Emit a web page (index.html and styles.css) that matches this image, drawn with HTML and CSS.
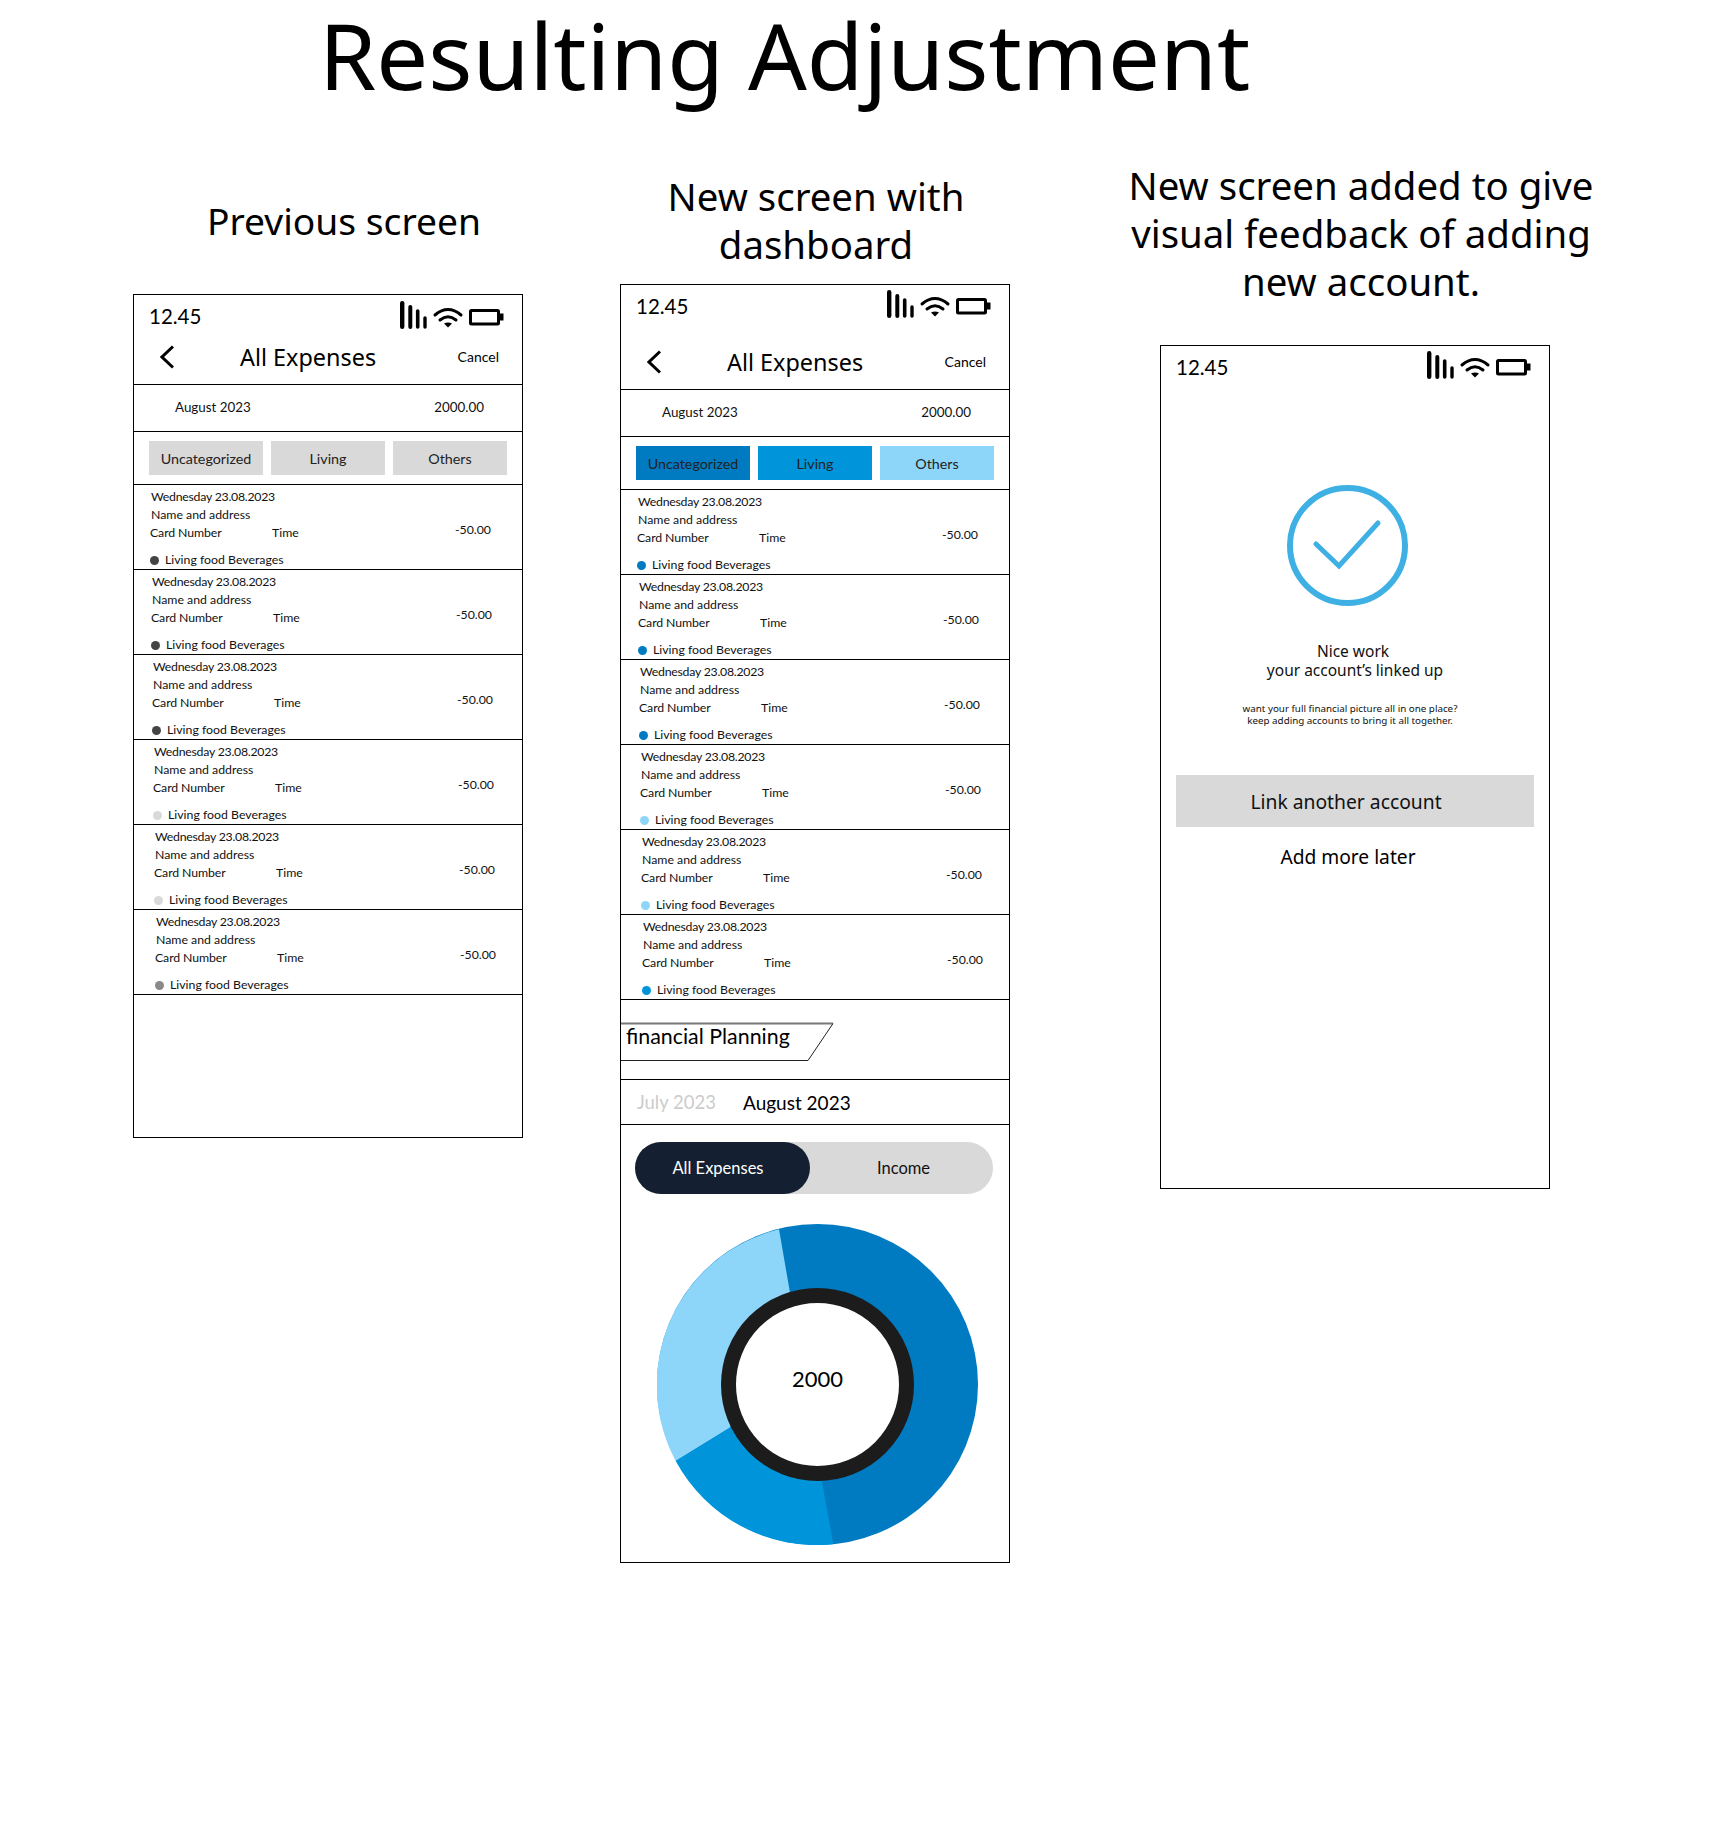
FILE: index.html
```html
<!DOCTYPE html>
<html lang="en">
<head>
<meta charset="utf-8">
<title>Resulting Adjustment</title>
<link rel="stylesheet" href="styles.css">
</head>
<body>
<h1 class="title">Resulting Adjustment</h1>
<main class="columns">

<section class="col col-prev">
<h2 class="heading">Previous screen</h2>
<div class="frame">
<header class="top">
<div class="status"><span class="clock">12.45</span>
<svg class="sys" width="104" height="28" viewBox="0 0 104 28"><g fill="none" stroke="#000" stroke-linecap="round"><path stroke-width="4.4" d="M2.2 2.2V25.8"/><path stroke-width="4" d="M10.3 6V26"/><path stroke-width="3.6" d="M17.7 10V26"/><path stroke-width="3.4" d="M25 17V26"/><path stroke-width="3" d="M35 14Q48 3 61 14"/><path stroke-width="3" d="M40 19Q48 12.5 56 19"/></g><path d="M44 22.5Q48 20.5 52 22.5L48 26.5Z"/><rect x="70.5" y="9.5" width="28" height="13.5" rx="1" fill="none" stroke="#000" stroke-width="3"/><path d="M100 12.5h3.5v7H100z"/></svg></div>
<div class="nav"><svg class="back" width="14" height="24" viewBox="0 0 14 24"><path d="M13 1.5L2 12L13 22.5" fill="none" stroke="#000" stroke-width="3"/></svg><span class="nav-title">All Expenses</span><span class="cancel">Cancel</span></div>
</header>
<div class="summary"><span>August 2023</span><span class="total">2000.00</span></div>
<div class="tabs"><span class="tab">Uncategorized</span><span class="tab">Living</span><span class="tab">Others</span></div>
<ul class="list">
<li class="row"><div class="row-left"><div class="l1">Wednesday 23.08.2023</div><div class="l2">Name and address</div><div class="l3"><span class="card">Card Number</span><span>Time</span></div><div class="l4"><i class="dot d-dark"></i>Living food Beverages</div></div><div class="amount">-50.00</div></li>
<li class="row"><div class="row-left"><div class="l1">Wednesday 23.08.2023</div><div class="l2">Name and address</div><div class="l3"><span class="card">Card Number</span><span>Time</span></div><div class="l4"><i class="dot d-dark"></i>Living food Beverages</div></div><div class="amount">-50.00</div></li>
<li class="row"><div class="row-left"><div class="l1">Wednesday 23.08.2023</div><div class="l2">Name and address</div><div class="l3"><span class="card">Card Number</span><span>Time</span></div><div class="l4"><i class="dot d-dark"></i>Living food Beverages</div></div><div class="amount">-50.00</div></li>
<li class="row"><div class="row-left"><div class="l1">Wednesday 23.08.2023</div><div class="l2">Name and address</div><div class="l3"><span class="card">Card Number</span><span>Time</span></div><div class="l4"><i class="dot d-pale"></i>Living food Beverages</div></div><div class="amount">-50.00</div></li>
<li class="row"><div class="row-left"><div class="l1">Wednesday 23.08.2023</div><div class="l2">Name and address</div><div class="l3"><span class="card">Card Number</span><span>Time</span></div><div class="l4"><i class="dot d-pale"></i>Living food Beverages</div></div><div class="amount">-50.00</div></li>
<li class="row"><div class="row-left"><div class="l1">Wednesday 23.08.2023</div><div class="l2">Name and address</div><div class="l3"><span class="card">Card Number</span><span>Time</span></div><div class="l4"><i class="dot d-grey"></i>Living food Beverages</div></div><div class="amount">-50.00</div></li>
</ul>
</div>
</section>

<section class="col col-dash">
<h2 class="heading">New screen with<br>dashboard</h2>
<div class="frame">
<header class="top">
<div class="status"><span class="clock">12.45</span>
<svg class="sys" width="104" height="28" viewBox="0 0 104 28"><g fill="none" stroke="#000" stroke-linecap="round"><path stroke-width="4.4" d="M2.2 2.2V25.8"/><path stroke-width="4" d="M10.3 6V26"/><path stroke-width="3.6" d="M17.7 10V26"/><path stroke-width="3.4" d="M25 17V26"/><path stroke-width="3" d="M35 14Q48 3 61 14"/><path stroke-width="3" d="M40 19Q48 12.5 56 19"/></g><path d="M44 22.5Q48 20.5 52 22.5L48 26.5Z"/><rect x="70.5" y="9.5" width="28" height="13.5" rx="1" fill="none" stroke="#000" stroke-width="3"/><path d="M100 12.5h3.5v7H100z"/></svg></div>
<div class="nav"><svg class="back" width="14" height="24" viewBox="0 0 14 24"><path d="M13 1.5L2 12L13 22.5" fill="none" stroke="#000" stroke-width="3"/></svg><span class="nav-title">All Expenses</span><span class="cancel">Cancel</span></div>
</header>
<div class="summary"><span>August 2023</span><span class="total">2000.00</span></div>
<div class="tabs"><span class="tab t-dark">Uncategorized</span><span class="tab t-mid">Living</span><span class="tab t-light">Others</span></div>
<ul class="list">
<li class="row"><div class="row-left"><div class="l1">Wednesday 23.08.2023</div><div class="l2">Name and address</div><div class="l3"><span class="card">Card Number</span><span>Time</span></div><div class="l4"><i class="dot d-blue"></i>Living food Beverages</div></div><div class="amount">-50.00</div></li>
<li class="row"><div class="row-left"><div class="l1">Wednesday 23.08.2023</div><div class="l2">Name and address</div><div class="l3"><span class="card">Card Number</span><span>Time</span></div><div class="l4"><i class="dot d-blue"></i>Living food Beverages</div></div><div class="amount">-50.00</div></li>
<li class="row"><div class="row-left"><div class="l1">Wednesday 23.08.2023</div><div class="l2">Name and address</div><div class="l3"><span class="card">Card Number</span><span>Time</span></div><div class="l4"><i class="dot d-blue"></i>Living food Beverages</div></div><div class="amount">-50.00</div></li>
<li class="row"><div class="row-left"><div class="l1">Wednesday 23.08.2023</div><div class="l2">Name and address</div><div class="l3"><span class="card">Card Number</span><span>Time</span></div><div class="l4"><i class="dot d-light"></i>Living food Beverages</div></div><div class="amount">-50.00</div></li>
<li class="row"><div class="row-left"><div class="l1">Wednesday 23.08.2023</div><div class="l2">Name and address</div><div class="l3"><span class="card">Card Number</span><span>Time</span></div><div class="l4"><i class="dot d-light"></i>Living food Beverages</div></div><div class="amount">-50.00</div></li>
<li class="row"><div class="row-left"><div class="l1">Wednesday 23.08.2023</div><div class="l2">Name and address</div><div class="l3"><span class="card">Card Number</span><span>Time</span></div><div class="l4"><i class="dot d-mid"></i>Living food Beverages</div></div><div class="amount">-50.00</div></li>
</ul>
<div class="planning"><div class="tag"><svg class="tag-shape" width="213" height="40" viewBox="0 0 213 40"><path d="M0 1.5H212" fill="none" stroke="#777" stroke-width="2"/><path d="M212 1.5L187 38.5H0" fill="none" stroke="#222" stroke-width="1"/></svg><span class="tag-text">financial Planning</span></div></div>
<div class="months"><span class="m-old">July 2023</span><span class="m-now">August 2023</span></div>
<div class="toggle-wrap"><div class="toggle"><span class="tg-on">All Expenses</span><span class="tg-off">Income</span></div></div>
<div class="chart"><div class="donut">
<svg class="donut-art" width="321" height="321" viewBox="0 0 321 321"><circle cx="160.5" cy="160.5" r="160.5" fill="#007ac1"/><path fill="#8dd6f9" d="M122 5.3A160.5 160.5 0 0 0 18.7 237L72.7 203.7L133 68.7Z"/><path fill="#0095db" d="M18.7 237A160.5 160.5 0 0 0 176.3 320.3L165 257.7L72.7 203.7Z"/></svg>
<div class="hole"><span>2000</span></div></div></div>
</div>
</section>

<section class="col col-done">
<h2 class="heading">New screen added to give<br>visual feedback of adding<br>new account.</h2>
<div class="frame">
<div class="status"><span class="clock">12.45</span>
<svg class="sys" width="104" height="28" viewBox="0 0 104 28"><g fill="none" stroke="#000" stroke-linecap="round"><path stroke-width="4.4" d="M2.2 2.2V25.8"/><path stroke-width="4" d="M10.3 6V26"/><path stroke-width="3.6" d="M17.7 10V26"/><path stroke-width="3.4" d="M25 17V26"/><path stroke-width="3" d="M35 14Q48 3 61 14"/><path stroke-width="3" d="M40 19Q48 12.5 56 19"/></g><path d="M44 22.5Q48 20.5 52 22.5L48 26.5Z"/><rect x="70.5" y="9.5" width="28" height="13.5" rx="1" fill="none" stroke="#000" stroke-width="3"/><path d="M100 12.5h3.5v7H100z"/></svg></div>
<svg class="check" width="121" height="121" viewBox="0 0 121 121"><circle cx="60.5" cy="60.5" r="57.5" fill="none" stroke="#3eb0e3" stroke-width="6"/><path d="M29 59L52 81L91 38" fill="none" stroke="#3eb0e3" stroke-width="5" stroke-linecap="round"/></svg>
<p class="nice"><span class="nice-a">Nice work</span>your account’s linked up</p>
<p class="hint">want your full financial picture all in one place?<br>keep adding accounts to bring it all together.</p>
<div class="link-btn">Link another account</div>
<div class="later">Add more later</div>
</div>
</section>

</main>
</body>
</html>
```
FILE: styles.css
```css
* { box-sizing: border-box; }
html, body { margin: 0; padding: 0; background: #fff; }
body { font-family: Lato, "Noto Sans", sans-serif; color: #111; width: 1728px; height: 1828px; overflow: hidden; }
.title { margin: 0; padding-left: 319px; height: 116px; font-family: "Noto Sans", sans-serif; font-size: 92.2px; line-height: 109px; font-weight: 400; color: #000; white-space: nowrap; }
.columns { display: flex; align-items: flex-start; padding-left: 133px; margin-top: 47px; }
.col { width: 390px; flex: none; }
.col-prev { padding-top: 34px; }
.col-dash { padding-top: 9px; margin-left: 97px; }
.col-done { margin-left: 150px; margin-top: -2px; }
.heading { margin: 0; font-family: "Noto Sans", sans-serif; font-size: 38.4px; line-height: 48px; font-weight: 400; color: #000; text-align: center; white-space: nowrap; }
.col-prev .heading { margin-bottom: 49px; padding-left: 32px; font-size: 37.2px; }
.col-dash .heading { margin-bottom: 16px; padding-left: 2px; }
.col-done .heading { margin: 0 -60px 40px -48px; }
.frame { width: 390px; border: 1px solid #000; background: #fff; }
.col-prev .frame { height: 844px; }
.col-dash .frame { height: 1279px; }
.col-done .frame { height: 844px; }

.top { border-bottom: 1px solid #000; }
.status { display: flex; align-items: center; justify-content: space-between; padding: 0 18px 0 15px; height: 37px; }
.clock { font-size: 20.5px; line-height: 28px; margin-top: 4px; color: #000; }
.sys { display: block; }
.nav { position: relative; display: flex; align-items: center; height: 67px; padding: 12px 23px 0 26px; }
.col-prev .status { height: 39px; }
.col-prev .clock { margin-top: 2px; }
.col-prev .nav { height: 50px; padding-top: 0; padding-bottom: 5px; }
.back { display: block; flex: none; }
.nav-title { font-family: "Noto Sans", sans-serif; font-size: 23.4px; line-height: 30px; color: #000; margin-left: 66px; }
.cancel { font-size: 14px; line-height: 20px; color: #000; margin-left: auto; }

.summary { display: flex; height: 47px; align-items: center; padding: 0 38px 2px 41px; justify-content: space-between; border-bottom: 1px solid #000; font-size: 13.4px; }
.tabs { display: flex; gap: 8px; height: 53px; padding: 9px 0 0 15px; border-bottom: 1px solid #000; }
.tab { width: 114px; height: 34px; background: #d9d9d9; display: flex; align-items: center; justify-content: center; font-size: 14.3px; color: #222; }
.t-dark { background: #007ac1; }
.t-mid { background: #0095db; }
.t-light { background: #8dd6f9; }

.list { list-style: none; margin: 0; padding: 0; }
.row { display: flex; height: 85px; border-bottom: 1px solid #000; font-size: 12.3px; padding-left: 17px; }
.row:nth-child(2) { padding-left: 18px; }
.row:nth-child(3) { padding-left: 19px; }
.row:nth-child(4) { padding-left: 20px; }
.row:nth-child(5) { padding-left: 21px; }
.row:nth-child(6) { padding-left: 22px; }
.row-left { width: 304px; flex: none; padding-top: 3px; }
.l1 { line-height: 18px; letter-spacing: -0.25px; }
.l2 { line-height: 17px; }
.l3 { line-height: 20px; margin-left: -1px; display: flex; }
.card { width: 122px; letter-spacing: -0.1px; }
.l4 { line-height: 18px; margin-top: 8px; margin-left: -1px; display: flex; align-items: center; }
.dot { width: 9px; height: 9px; border-radius: 50%; margin-right: 6px; flex: none; }
.d-dark { background: #444; }
.d-pale { background: #d9d9d9; }
.d-grey { background: #8c8888; }
.d-blue { background: #007ac1; }
.d-mid { background: #0095db; }
.d-light { background: #8dd6f9; }
.amount { line-height: 18px; margin-top: 36px; }

.planning { height: 80px; padding-top: 21px; border-bottom: 1px solid #000; }
.tag { position: relative; width: 213px; height: 40px; padding-left: 5px; margin-top: 1px; }
.tag-shape { position: absolute; left: 0; top: 0; }
.tag-text { position: relative; top: -1px; font-size: 21.4px; line-height: 30px; color: #000; }
.months { display: flex; height: 45px; align-items: center; padding-left: 16px; border-bottom: 1px solid #000; font-size: 19px; }
.m-old { color: #ccc; width: 106px; font-size: 18.5px; }
.m-now { color: #000; }
.toggle-wrap { padding: 17px 0 0 14px; }
.toggle { display: flex; width: 358px; height: 52px; border-radius: 26px; background: #d9d9d9; font-size: 16.5px; color: #111; }
.tg-on { width: 175px; padding-right: 9px; background: #141f31; color: #fff; border-radius: 26px; display: flex; align-items: center; justify-content: center; }
.tg-off { flex: 1; display: flex; align-items: center; justify-content: center; padding-left: 4px; }
.chart { padding: 30px 0 0 36px; }
.donut { position: relative; width: 321px; height: 321px; display: flex; align-items: center; justify-content: center; }
.donut-art { position: absolute; left: 0; top: 0; display: block; }
.hole { position: relative; width: 193px; height: 193px; border-radius: 50%; border: 15px solid #1c1c1c; background: #fff; display: flex; align-items: center; justify-content: center; padding-bottom: 12px; font-size: 22px; color: #000; }

.check { display: block; margin: 102px 0 0 126px; }
.nice { margin: 36px 0 0; text-align: center; font-family: "Noto Sans", sans-serif; font-size: 15.5px; line-height: 19px; color: #111; }
.nice-a { display: block; padding-right: 4px; }
.hint { margin: 23px 0 0; padding-right: 10px; text-align: center; font-family: "Noto Sans", sans-serif; font-size: 9.8px; line-height: 12px; color: #111; }
.link-btn { margin: 48px 0 0 15px; width: 358px; height: 52px; background: #d9d9d9; display: flex; align-items: center; justify-content: center; padding-right: 18px; font-family: "Noto Sans", sans-serif; font-size: 19.3px; color: #111; }
.later { margin-top: 15px; padding-right: 14px; text-align: center; font-family: "Noto Sans", sans-serif; font-size: 19.2px; line-height: 30px; color: #000; }
```
